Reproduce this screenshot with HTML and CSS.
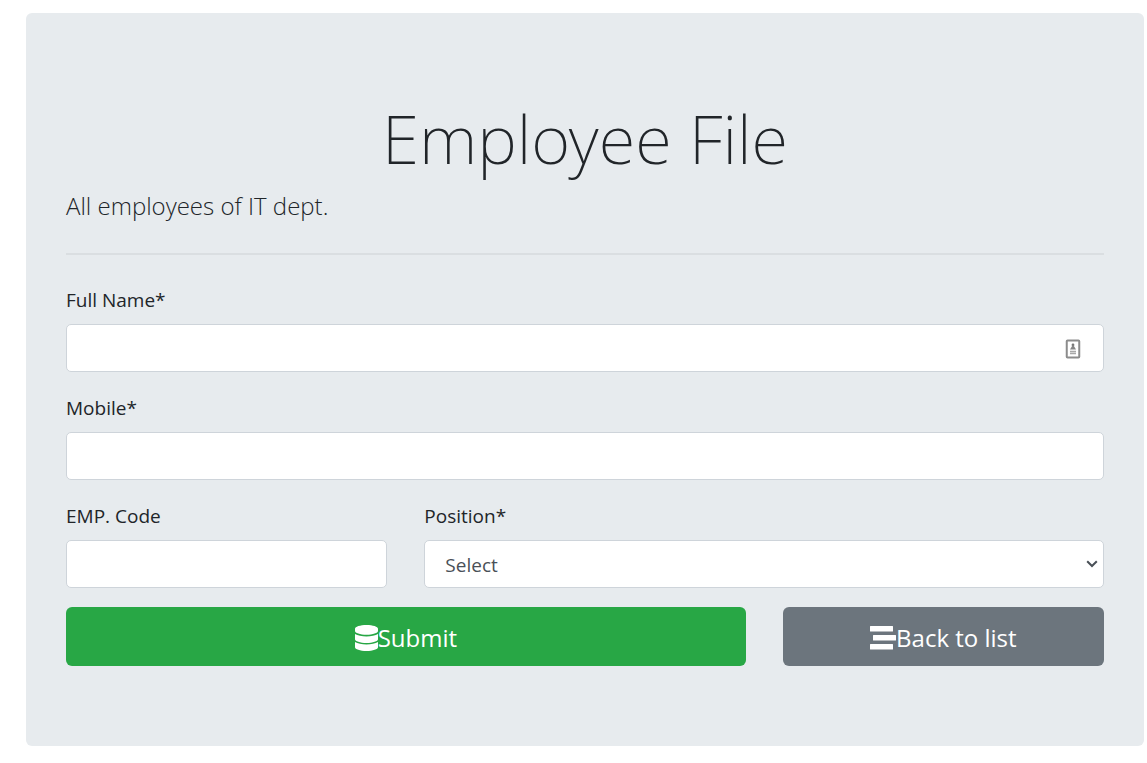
FILE: index.html
```html
<!DOCTYPE html>
<html lang="en">
<head>
<meta charset="utf-8">
<meta name="viewport" content="width=device-width, initial-scale=1">
<title>Employee File</title>
<link rel="stylesheet" href="styles.css">
</head>
<body>
<main class="jumbotron">
  <h1 class="title">Employee File</h1>
  <p class="lead">All employees of IT dept.</p>
  <hr class="divider">
  <form class="form">
    <div class="field full">
      <label for="fullName">Full Name*</label>
      <div class="control-wrap">
        <input class="control" type="text" id="fullName" name="fullName">
        <svg class="autofill" viewBox="0 0 16 20" aria-hidden="true">
          <rect x="1.75" y="1.5" width="12.500" height="17" rx="0.8" fill="#fff" stroke="#8c8c8c" stroke-width="2"/>
          <circle cx="8" cy="6" r="1.4" fill="#777"/>
          <path d="M8 5.500 11 10.500H5Z" fill="#858585"/>
          <path d="M5 12.500H11M5 14.500H11" stroke="#a8a8a8" stroke-width="1.4"/>
        </svg>
      </div>
    </div>
    <div class="field full">
      <label for="mobile">Mobile*</label>
      <input class="control" type="text" id="mobile" name="mobile">
    </div>
    <div class="field narrow">
      <label for="empCode">EMP. Code</label>
      <input class="control" type="text" id="empCode" name="empCode">
    </div>
    <div class="field wide">
      <label for="position">Position*</label>
      <div class="control-wrap">
        <select class="control select" id="position" name="position">
          <option>Select</option>
        </select>
        <svg class="chevron" viewBox="0 0 12 8" aria-hidden="true">
          <path d="M1.2 1.2 6 6 10.8 1.2" fill="none" stroke="#495057" stroke-width="2"/>
        </svg>
      </div>
    </div>
    <button class="btn submit wide" type="submit">
      <svg class="icon-db" viewBox="0 0 448 512" preserveAspectRatio="none" aria-hidden="true"><path fill="currentColor" d="M448 73.143v45.714C448 159.143 347.667 192 224 192S0 159.143 0 118.857V73.143C0 32.857 100.333 0 224 0s224 32.857 224 73.143zM448 176v102.857C448 319.143 347.667 352 224 352S0 319.143 0 278.857V176c48.125 33.143 136.208 48.572 224 48.572S399.874 209.143 448 176zm0 160v102.857C448 479.143 347.667 512 224 512S0 479.143 0 438.857V336c48.125 33.143 136.208 48.572 224 48.572S399.874 369.143 448 336z"/></svg>Submit
    </button>
    <button class="btn back narrow" type="button">
      <svg class="icon-stream" viewBox="0 0 26 26" aria-hidden="true"><path fill="currentColor" d="M.5 1H22.500Q23 1 23 1.500V6Q23 6.500 22.500 6.500H.5Q0 6.500 0 6V1.500Q0 1 .5 1ZM3.500 10H25.500Q26 10 26 10.500V15Q26 15.500 25.500 15.500H3.500Q3 15.500 3 15V10.500Q3 10 3.500 10ZM.5 19H22.500Q23 19 23 19.500V24Q23 24.500 22.500 24.500H.5Q0 24.500 0 24V19.500Q0 19 .5 19Z"/></svg>Back to list
    </button>
  </form>
</main>
</body>
</html>
```
FILE: styles.css
```css
*,
*::before,
*::after {
  box-sizing: border-box;
}

body {
  margin: 0;
  padding: 13px 3px 16px 26px;
  background: #fff;
  color: #212529;
  font-family: "Segoe UI", "Open Sans", "Noto Sans", sans-serif;
  font-size: 19px;
  line-height: 28px;
}

.jumbotron {
  padding: 80px 40px;
  border-radius: 6px;
  background: #e7ebee;
}

.title {
  margin: 0 0 5px;
  font-family: "Segoe UI", "Noto Sans", "Open Sans", sans-serif;
  font-size: 67px;
  font-weight: 200;
  line-height: 90px;
  text-align: center;
}

.lead {
  margin: 0;
  font-size: 24px;
  font-weight: 300;
  line-height: 36px;
}

.divider {
  margin: 29px 0 31px;
  border: 0;
  border-top: 2px solid #dadee1;
}

.form {
  display: grid;
  grid-template-columns: repeat(12, 1fr);
  column-gap: 37px;
}

.field {
  display: flex;
  flex-direction: column;
  gap: 10px;
  margin-bottom: 22px;
}

.full {
  grid-column: span 12;
}

.narrow {
  grid-column: span 4;
}

.wide {
  grid-column: span 8;
}

.field.narrow,
.field.wide {
  margin-bottom: 19px;
}

.control-wrap {
  position: relative;
}

.control {
  display: block;
  width: 100%;
  height: 48px;
  padding: 4px 20px;
  border: 1px solid #ced4da;
  border-radius: 5px;
  background: #fff;
  color: #495057;
  font: inherit;
}

.select {
  appearance: none;
  padding-top: 6px;
}

.autofill,
.chevron {
  position: absolute;
  pointer-events: none;
}

.autofill {
  top: 15px;
  right: 23px;
  width: 16px;
  height: 20px;
}

.chevron {
  top: 20px;
  right: 6px;
  width: 12px;
  height: 8px;
}

.btn {
  display: flex;
  align-items: center;
  justify-content: center;
  height: 59px;
  padding: 6px 20px 4px;
  border: 0;
  border-radius: 6px;
  color: #fff;
  font: inherit;
  font-size: 24px;
  cursor: pointer;
}

.submit {
  background: #28a745;
}

.back {
  background: #6c757d;
}

.icon-db {
  width: 23px;
  height: 26px;
}

.icon-stream {
  width: 26px;
  height: 26px;
}
```
